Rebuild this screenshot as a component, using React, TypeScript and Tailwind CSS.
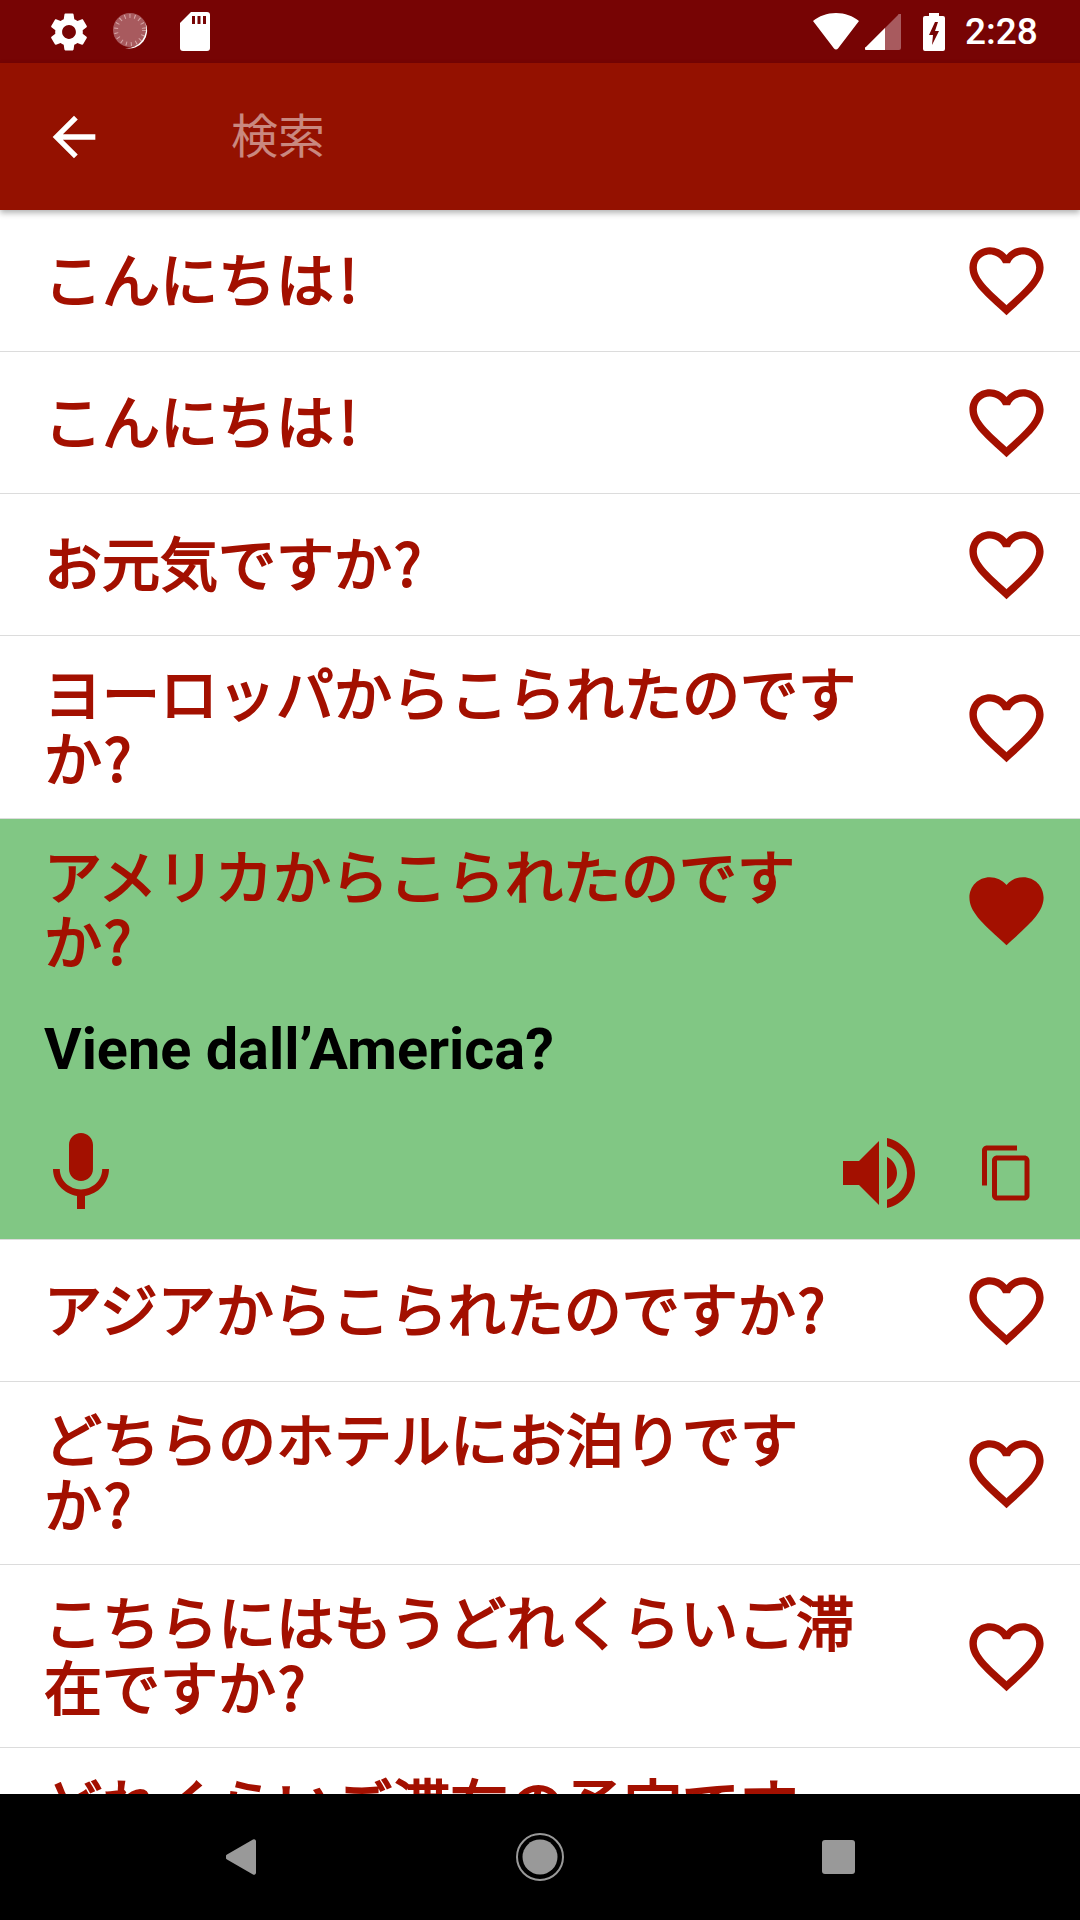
import React from 'react';

const HEART_OUTLINE =
    'M16.5 3c-1.74 0-3.41.81-4.5 2.09C10.91 3.81 9.24 3 7.5 3 4.42 3 2 5.42 2 8.5c0 3.78 3.4 6.86 8.55 11.54L12 21.35l1.45-1.32C18.6 15.36 22 12.28 22 8.5 22 5.42 19.58 3 16.5 3zm-4.4 15.55l-.1.1-.1-.1C7.14 14.24 4 11.39 4 8.5 4 6.5 5.5 5 7.5 5c1.54 0 3.04.99 3.57 2.36h1.87C13.46 5.99 14.96 5 16.5 5c2 0 3.5 1.5 3.5 3.5 0 2.89-3.14 5.74-7.9 10.05z';
const HEART_FILLED =
    'M12 21.35l-1.45-1.32C5.4 15.36 2 12.28 2 8.5 2 5.42 4.42 3 7.5 3c1.74 0 3.41.81 4.5 2.09C13.09 3.81 14.76 3 16.5 3 19.58 3 22 5.42 22 8.5c0 3.78-3.4 6.86-8.55 11.54L12 21.35z';

const Icon = ({ d, className }: { d: string; className: string }) => (
    <svg viewBox="0 0 24 24" fill="currentColor" className={className}>
        <path d={d} />
    </svg>
);

const StatusBar = () => (
    <div className="flex h-[63px] shrink-0 items-center bg-[#770404] text-white">
        <Icon
            className="ml-[46px] h-[46px] w-[46px]"
            d="M19.14 12.94c.04-.3.06-.61.06-.94 0-.32-.02-.64-.07-.94l2.03-1.58c.18-.14.23-.41.12-.61l-1.92-3.32c-.12-.22-.37-.29-.59-.22l-2.39.96c-.5-.38-1.03-.7-1.62-.94l-.36-2.54c-.04-.24-.24-.41-.48-.41h-3.84c-.24 0-.43.17-.47.41l-.36 2.54c-.59.24-1.13.57-1.62.94l-2.39-.96c-.22-.08-.47 0-.59.22L2.74 8.87c-.12.21-.08.47.12.61l2.03 1.58c-.05.3-.09.63-.09.94s.02.64.07.94l-2.03 1.58c-.18.14-.23.41-.12.61l1.92 3.32c.12.22.37.29.59.22l2.39-.96c.5.38 1.03.7 1.62.94l.36 2.54c.05.24.24.41.48.41h3.84c.24 0 .44-.17.47-.41l.36-2.54c.59-.24 1.13-.56 1.62-.94l2.39.96c.22.08.47 0 .59-.22l1.92-3.32c.12-.22.07-.47-.12-.61l-2.01-1.58zM12 15.6c-1.98 0-3.6-1.62-3.6-3.6s1.62-3.6 3.6-3.6 3.6 1.62 3.6 3.6-1.62 3.6-3.6 3.6z"
        />
        <svg viewBox="0 0 38 38" className="ml-[21px] h-[38px] w-[38px]">
            <circle cx="17" cy="17" r="17" fill="#a85a5e" />
            <circle cx="17" cy="17" r="14" fill="none" stroke="#d8a8a8" strokeWidth="4" strokeDasharray="1 4" />
            <path d="M32 9 A18 18 0 0 1 12 35 A19.5 19.5 0 0 0 32 9z" fill="#fff" />
        </svg>
        <svg viewBox="0 0 30 39" className="ml-[29px] h-[39px] w-[30px]" fill="#fff">
            <path d="M11 0h16a3 3 0 0 1 3 3v33a3 3 0 0 1-3 3H3a3 3 0 0 1-3-3V11L11 0z" />
            <path d="M12 4h3v8h-3zM17.5 4h3v8h-3zM23 4h3v8h-3z" fill="#770404" />
        </svg>
        <svg viewBox="0 0 46 37" className="ml-[603px] h-[37px] w-[46px]" fill="#fff">
            <path d="M23 0C14 0 6 3 0 8l21 27.5a2.5 2.5 0 0 0 4 0L46 8C40 3 32 0 23 0z" />
        </svg>
        <svg viewBox="0 0 36 36" className="ml-[6px] h-[36px] w-[36px]">
            <path d="M36 0v34a2 2 0 0 1-2 2H2a1.5 1.5 0 0 1-1-3L33 1a2 2 0 0 1 3-1z" fill="#a85a5e" />
            <path d="M20 14v22H2a1.5 1.5 0 0 1-1-3z" fill="#fff" />
        </svg>
        <svg viewBox="0 0 22 38" className="ml-[22px] h-[38px] w-[22px]">
            <path d="M6 0h10v3h4a2 2 0 0 1 2 2v31a2 2 0 0 1-2 2H2a2 2 0 0 1-2-2V5a2 2 0 0 1 2-2h4z" fill="#fff" />
            <path d="M12 9 6 22h4l-1 10 7-14h-4l3-9z" fill="#770404" />
        </svg>
        <span className="ml-[20px] font-['Roboto',sans-serif] text-[37px] leading-none font-medium">
            2:28
        </span>
    </div>
);

const AppBar = () => (
    <div className="relative z-10 flex h-[147px] shrink-0 items-center bg-[#941100] shadow-[0_3px_6px_rgba(0,0,0,0.3)]">
        <Icon
            className="ml-[42px] h-[64px] w-[64px] text-white"
            d="M20 11H7.83l5.59-5.59L12 4l-8 8 8 8 1.41-1.41L7.83 13H20v-2z"
        />
        <span className="ml-[125px] text-[47px] leading-none text-white/50">
            検索
        </span>
    </div>
);

const Phrase = ({ text, liked }: { text: string; liked?: boolean }) => (
    <div className="flex min-h-[141px] items-center pr-[28px] pl-[44px]">
        <div className="w-[826px] pt-[23px] pb-[29px] font-['Noto_Sans_CJK_JP',sans-serif] text-[58px] leading-[65px] text-[#a31000] [-webkit-text-stroke:2px_#a31000]">
            {text.slice(0, -1)}
            <span className={text.endsWith('!') ? 'ml-[5px]' : 'ml-[2px]'}>
                {text.slice(-1)}
            </span>
        </div>
        <Icon
            className="mr-[1px] ml-auto h-[89px] w-[89px] text-[#a31000]"
            d={liked ? HEART_FILLED : HEART_OUTLINE}
        />
    </div>
);

const SelectedRow = () => (
    <div className="border-b border-[#dcdcdc] bg-[#81c784]">
        <Phrase text="アメリカからこられたのですか?" liked />
        <div className="flex h-[97px] items-center pt-[2px] pl-[44px] text-[57.6px] font-bold text-black">
            Viene dall’America?
        </div>
        <div className="flex h-[141px] items-center pt-[9px] text-[#a31000]">
            <Icon
                className="ml-[33px] h-[96px] w-[96px]"
                d="M12 14c1.66 0 2.99-1.34 2.99-3L15 5c0-1.66-1.34-3-3-3S9 3.34 9 5v6c0 1.66 1.34 3 3 3zm5.3-3c0 3-2.54 5.1-5.3 5.1S6.7 14 6.7 11H5c0 3.41 2.72 6.23 6 6.72V21h2v-3.28c3.28-.48 6-3.3 6-6.72h-1.7z"
            />
            <Icon
                className="ml-auto h-[96px] w-[96px]"
                d="M3 9v6h4l5 5V4L7 9H3zm13.5 3c0-1.77-1.02-3.29-2.5-4.03v8.05c1.48-.73 2.5-2.25 2.5-4.02zM14 3.23v2.06c2.89.86 5 3.54 5 6.71s-2.11 5.85-5 6.71v2.06c4.01-.91 7-4.49 7-8.77s-2.99-7.86-7-8.77z"
            />
            <Icon
                className="mr-[43px] ml-[50px] h-[60px] w-[60px]"
                d="M16 1H4c-1.1 0-2 .9-2 2v14h2V3h12V1zm3 4H8c-1.1 0-2 .9-2 2v14c0 1.1.9 2 2 2h11c1.1 0 2-.9 2-2V7c0-1.1-.9-2-2-2zm0 16H8V7h11v14z"
            />
        </div>
    </div>
);

const NavBar = () => (
    <div className="flex h-[126px] shrink-0 items-center bg-black">
        <svg viewBox="0 0 30 36" className="ml-[226px] h-[36px] w-[30px]" fill="#999">
            <path d="M27 .5 1 15.5a3 3 0 0 0 0 5l26 15a2 2 0 0 0 3-1.7V2.2A2 2 0 0 0 27 .5z" />
        </svg>
        <svg viewBox="0 0 48 48" className="ml-[260px] h-[48px] w-[48px]">
            <circle cx="24" cy="24" r="23" fill="none" stroke="#999" strokeWidth="2" />
            <circle cx="24" cy="24" r="17.5" fill="#999" />
        </svg>
        <div className="ml-[258px] h-[34px] w-[33px] rounded-[3px] bg-[#999]" />
    </div>
);

const phrasesBefore = [
    'こんにちは!',
    'こんにちは!',
    'お元気ですか?',
    'ヨーロッパからこられたのですか?',
];
const phrasesAfter = [
    'アジアからこられたのですか?',
    'どちらのホテルにお泊りですか?',
    'こちらにはもうどれくらいご滞在ですか?',
    'どれくらいご滞在の予定ですか?',
];

const Row = ({ text }: { text: string }) => (
    <div className="border-b border-[#dcdcdc] bg-white">
        <Phrase text={text} />
    </div>
);

export default function App() {
    return (
        <div className="flex h-[1920px] w-[1080px] flex-col overflow-hidden bg-white font-['Roboto','Noto_Sans_CJK_JP',sans-serif]">
            <StatusBar />
            <AppBar />
            <div className="min-h-0 flex-1 overflow-hidden">
                {phrasesBefore.map((text, i) => (
                    <Row key={i} text={text} />
                ))}
                <SelectedRow />
                {phrasesAfter.map((text, i) => (
                    <Row key={i} text={text} />
                ))}
            </div>
            <NavBar />
        </div>
    );
}
